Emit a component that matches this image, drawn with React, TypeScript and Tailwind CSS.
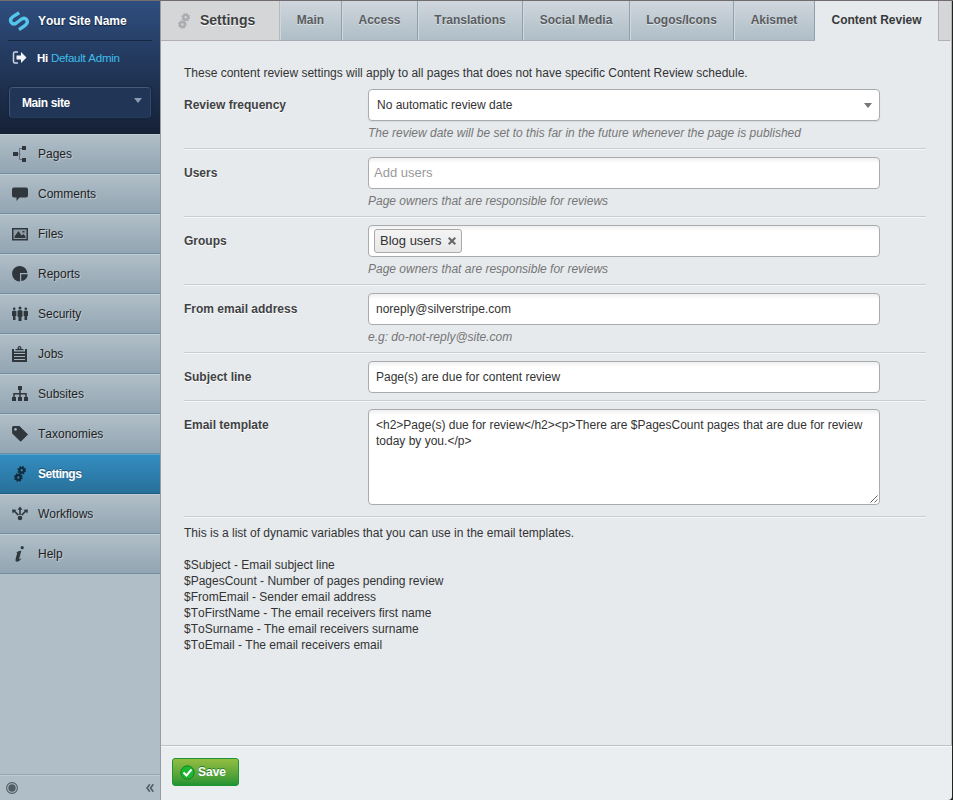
import React from "react";

const ink = "#2f373d";

const SmallGears = ({ color }: { color: string }) => (
  <svg width="16" height="16" viewBox="0 0 16 16" fill="none" stroke={color}>
    <circle cx="9.700" cy="4.300" r="2.300" strokeWidth="2.200" />
    <circle cx="9.700" cy="4.300" r="3.600" strokeWidth="1.500" strokeDasharray="1.600 1.230" />
    <circle cx="6.300" cy="11.500" r="2.300" strokeWidth="2.200" />
    <circle cx="6.300" cy="11.500" r="3.600" strokeWidth="1.500" strokeDasharray="1.600 1.230" />
  </svg>
);

const icons: Record<string, React.ReactNode> = {
  Pages: (
    <>
      <path d="M1 6h5v4H1zM10 0h4v4h-4zM10 12h4v4h-4z" fill={ink} />
      <path d="M6 8h2.500M10 2.500H7.500v11H10" stroke="#5f6e78" fill="none" />
    </>
  ),
  Comments: <path d="M2 1.500h12q2 0 2 2v6q0 2-2 2H7.500L4.500 15v-3.500H2q-2 0-2-2v-6q0-2 2-2z" fill={ink} />,
  Files: (
    <>
      <path d="M.75 2.750h14.500v11H.75z" fill="#8f9ca5" stroke={ink} strokeWidth="1.500" />
      <path d="M2.500 12V10.500L6.500 5l3 4.500L11.500 8l2 2.500V12zM10.500 5h2v1.500h-2z" fill={ink} />
    </>
  ),
  Reports: (
    <>
      <path d="M15.400 7A7.700 7.700 0 1 0 8 15.400V7z" fill={ink} />
      <path d="M9.200 8.300H15.800a7 7 0 0 1-6.600 6.800z" fill={ink} />
    </>
  ),
  Security: (
    <g fill={ink}>
      <circle cx="2.200" cy="2.800" r="1.300" />
      <circle cx="8" cy="2" r="1.500" />
      <circle cx="13.800" cy="2.800" r="1.300" />
      <path d="M0 5.300q2.200-1.500 4.400 0v4.700H3.500v4H1v-4H0zM5.500 4.700q2.500-1.500 5 0v6h-1v4.300h-3v-4.300h-1zM11.600 5.300q2.200-1.500 4.400 0v4.700h-.9v4h-2.600v-4h-.9z" />
    </g>
  ),
  Jobs: (
    <>
      <path d="M0 3h2v2.500h11V3h2v13H0z" fill={ink} />
      <path d="M3.500 4.300V3h2q0-3 2-3t2 3h2v1.300z" fill={ink} />
      <circle cx="7.500" cy="2" r=".8" fill="#a2b1bb" />
      <path d="M2 7.500h11M2 10.500h11M2 13.500h11" stroke="#a2b1bb" />
    </>
  ),
  Subsites: (
    <>
      <path d="M6 0h4v4H6zM0 11h4v4H0zM6 11h4v4H6zM12 11h4v4h-4z" fill={ink} />
      <path d="M8 4v7M2 11V7.750h12V11" stroke={ink} strokeWidth="1.500" fill="none" />
    </>
  ),
  Taxonomies: (
    <path
      fillRule="evenodd"
      fill={ink}
      d="M1.500 0h6L16 8.500 8.700 15.800.2 7.500 0 1.500Q0 0 1.500 0zM3.500 2a1.400 1.400 0 1 0 .01 0z"
    />
  ),
  Workflows: (
    <g fill={ink}>
      <circle cx="8" cy="12" r="2.300" />
      <path d="M8 .5l2.500 3.200H8.800V9H7.200V3.700H5.500zM0 3.500l4.500.2-1.200 1.300 3.600 3.500-1.100 1.200-3.700-3.600L.6 7.500zM16 3.500l-4.500.2 1.200 1.300-3.600 3.500 1.100 1.200 3.700-3.600 1.500 1.400z" />
    </g>
  ),
  Help: (
    <g fill={ink}>
      <circle cx="10.200" cy="1.700" r="1.600" />
      <path d="M4.500 6.500q2-2 4.800-1.700L7.200 12.700q0 1.200 1.800-.4l.3.500Q7 16 4.700 15.700 2.900 15 3.700 12.500L5.300 6.800l-.8.300z" />
    </g>
  ),
};

const menu = ["Pages", "Comments", "Files", "Reports", "Security", "Jobs", "Subsites", "Taxonomies", "Settings", "Workflows", "Help"];

function MenuItem({ name }: { name: string }) {
  const active = name === "Settings";
  return (
    <li
      className={
        "flex h-10 items-center border-t border-b pl-3 " +
        (active
          ? "border-t-[#55a4d2] border-b-[#1b5c84] bg-linear-to-b from-[#338dc1] to-[#287099] font-bold tracking-[-0.5px] text-white [text-shadow:0_-1px_0_#1e5270]"
          : "border-t-[#c1cdd4] border-b-[#748d9d] bg-linear-to-b from-[#b0bec7] to-[#92a5b2] text-[#1f1f1f] [text-shadow:1px_1px_0_#bfcad2]")
      }
    >
      {active ? (
        <SmallGears color="#122b3c" />
      ) : (
        <svg width="16" height="16" viewBox="0 0 16 16">{icons[name]}</svg>
      )}
      <span className="ml-2.5">{name}</span>
    </li>
  );
}

function Sidebar() {
  return (
    <aside className="flex w-[161px] shrink-0 flex-col border-r border-[#969ca1] bg-[#b0bec7]">
      <div className="h-[133px] bg-linear-to-b from-[#2f4e7f] to-[#152136]">
        <div className="mx-2 flex h-10 items-center border-b border-[#172540]">
          <svg width="22" height="22" viewBox="0 0 22 22" fill="none" stroke="#55c5ec" strokeWidth="3.400">
            <path d="M11.200 2.800 5 6.600Q1.200 9.300 3.300 12.500 5.300 15.200 8.400 13l5-3.800q3.300-2 5.200.4 2 3.200-1.400 5.700L11 19.700" />
          </svg>
          <span className="ml-2 font-bold text-white [text-shadow:0_1px_1px_#10203a]">Your Site Name</span>
        </div>
        <div className="flex h-[34px] items-center pl-3">
          <svg width="16" height="14" viewBox="0 0 16 14">
            <path d="M6 1H3Q1.500 1 1.500 2.500v8Q1.500 12 3 12h3" fill="none" stroke="#cdd5e2" strokeWidth="1.500" />
            <path d="M4.500 4.500H9V1l5.500 5.500L9 12V8.500H4.500z" fill="#f3f4f8" />
          </svg>
          <span className="ml-[9px] text-[11.500px] tracking-[-0.27px] text-[#3ebeec]">
            <b className="text-white">Hi</b> Default Admin
          </span>
        </div>
        <div className="mx-[9px] mt-3 flex h-[31px] items-center rounded border border-t-[#485a7b] border-r-[#354869] border-b-[#263b5c] border-l-[#425475] bg-[#213557] pr-2 pl-3 shadow-[0_0_2px_#101e35]">
          <span className="flex-1 font-bold tracking-[-0.4px] text-white">Main site</span>
          <span className="-mt-[5px] border-x-[4.500px] border-t-[5px] border-x-transparent border-t-[#8d9ab1]" />
        </div>
      </div>
      <ul>
        {menu.map((name) => (
          <MenuItem key={name} name={name} />
        ))}
      </ul>
      <div className="mt-auto flex h-[26px] items-center justify-between border-t border-[#96a8b3] pr-1.5 pl-1.5 shadow-[inset_0_1px_0_#bfcbd2]">
        <svg width="12" height="12" viewBox="0 0 12 12">
          <circle cx="6" cy="6" r="5.400" fill="none" stroke="#505c63" strokeWidth="1.100" />
          <circle cx="6" cy="6" r="3.700" fill="#505c63" />
        </svg>
        <svg width="8" height="8" viewBox="0 0 8 8" fill="none" stroke="#505b62" strokeWidth="1.600">
          <path d="M3.800.3 1 4l2.800 3.700M7.300.3 4.500 4l2.800 3.700" />
        </svg>
      </div>
    </aside>
  );
}

const tabs = [
  { name: "Main", width: "w-[62px]" },
  { name: "Access", width: "w-[76px]" },
  { name: "Translations", width: "w-[105px]" },
  { name: "Social Media", width: "w-[107px]" },
  { name: "Logos/Icons", width: "w-[104px]" },
  { name: "Akismet", width: "w-[81px]" },
];

function Header() {
  return (
    <header className="flex h-10 shrink-0 bg-[#d5d6d8] pr-px font-bold">
      <div className="flex w-[119px] items-center border-r border-b border-r-[#b5b9bc] border-b-[#b4afb5] pl-[15px]">
        <SmallGears color="#a9abae" />
        <h1 className="ml-2 pb-0.5 text-[14px] text-[#3c3f42] [text-shadow:0_1px_0_#fff]">Settings</h1>
      </div>
      {tabs.map((t) => (
        <div
          key={t.name}
          className={
            "flex items-center justify-center border-r border-b border-r-[#8fa1ae] border-b-[#a8adb5] bg-linear-to-b from-[#d0d6dd] to-[#aebec7] pb-0.5 text-[#5a5c5f] shadow-[inset_1px_0_0_#ced9de] [text-shadow:0_1px_0_#dfe4e8] " +
            t.width
          }
        >
          {t.name}
        </div>
      ))}
      <div className="flex w-[123px] items-center justify-center bg-[#e6eaed] pb-[3px] text-[#37393b]">Content Review</div>
      <div className="flex-1 border-b border-l border-[#b4afb5]" />
    </header>
  );
}

const box = "w-[512px] rounded border border-[#a9abad] bg-white text-[#333] shadow-[inset_0_5px_4px_-3px_#ececec]";

function Row({ label, help, className = "pb-[7px]", children }: { label: string; help?: string; className?: string; children: React.ReactNode }) {
  return (
    <div className={"flex border-b border-[#c9cdd1] pt-2 shadow-[0_1px_0_#f5f7f8] " + className}>
      <label className="w-[184px] pt-2 font-bold text-[#3f4143] [text-shadow:0_1px_0_#fff]">{label}</label>
      <div>
        {children}
        {help && <p className="mt-1 text-[#767676] italic">{help}</p>}
      </div>
    </div>
  );
}

function Form() {
  return (
    <div className="flex-1 bg-[#e6eaed] pt-6 pr-[25px] pl-[23px] text-[#333]">
      <p>These content review settings will apply to all pages that does not have specific Content Review schedule.</p>
      <Row label="Review frequency" help="The review date will be set to this far in the future whenever the page is published">
        <div className="flex h-8 w-[512px] items-center justify-between rounded border border-[#a9abad] bg-white pr-[7px] pl-2 shadow-[0_1px_1px_#d5d8da]">
          No automatic review date
          <span className="border-x-[4.500px] border-t-[5px] border-x-transparent border-t-[#777]" />
        </div>
      </Row>
      <Row label="Users" help="Page owners that are responsible for reviews">
        <div className={box + " flex h-8 items-center pl-[5px]"}>
          <span className="text-[13px] text-[#999]">Add users</span>
        </div>
      </Row>
      <Row label="Groups" help="Page owners that are responsible for reviews">
        <div className={box + " flex h-8 items-center pl-[5px]"}>
          <span className="flex h-6 w-[88px] items-center justify-between rounded-[3px] border border-[#aaa] bg-linear-to-b from-[#f4f4f4] to-[#e8e8e8] pr-[5px] pl-[5px] text-[13px]">
            Blog users
            <svg width="8" height="8" viewBox="0 0 8 8" stroke="#666" strokeWidth="2">
              <path d="M.7.7l6.600 6.600M7.300.7.7 7.300" />
            </svg>
          </span>
        </div>
      </Row>
      <Row label="From email address" help="e.g: do-not-reply@site.com">
        <div className={box + " flex h-8 items-center pl-[7px]"}>noreply@silverstripe.com</div>
      </Row>
      <Row label="Subject line">
        <div className={box + " flex h-8 items-center pl-[7px]"}>Page(s) are due for content review</div>
      </Row>
      <Row label="Email template" className="pb-[11px]">
        <div className={box + " flex h-24 flex-col justify-between pt-[7px] pl-[7px]"}>
          <p>
            &lt;h2&gt;Page(s) due for review&lt;/h2&gt;&lt;p&gt;There are $PagesCount pages that are due for review
            <br />
            today by you.&lt;/p&gt;
          </p>
          <svg className="mr-px mb-px self-end" width="8" height="8" viewBox="0 0 8 8" stroke="#666">
            <path d="M.5 7.500l7-7M4.500 7.500l3-3" />
          </svg>
        </div>
      </Row>
      <p className="mt-2">This is a list of dynamic variables that you can use in the email templates.</p>
      <p className="mt-4">
        $Subject - Email subject line
        <br />
        $PagesCount - Number of pages pending review
        <br />
        $FromEmail - Sender email address
        <br />
        $ToFirstName - The email receivers first name
        <br />
        $ToSurname - The email receivers surname
        <br />
        $ToEmail - The email receivers email
      </p>
    </div>
  );
}

export default function App() {
  return (
    <div className="flex h-[800px] w-[953px] overflow-hidden border-t border-t-[#706c70] bg-[#22251f] pr-px font-['Liberation_Sans',Arial,sans-serif] text-[12px] leading-4 [font-kerning:none]">
      <Sidebar />
      <main className="flex w-[791px] flex-col overflow-hidden rounded-br-[4px]">
        <div className="flex flex-1 flex-col border-r border-[#b1b4b6]">
          <Header />
          <Form />
        </div>
        <footer className="h-[55px] border-t border-[#bfc2c4] bg-[#eaeef1] pt-3 pl-[11px] shadow-[inset_0_1px_0_#f7f9fa]">
          <button className="flex h-7 w-[67px] items-center rounded-[3px] border border-[#1f9433] bg-linear-to-b from-[#93be42] to-[#1f9433] pl-[7px] font-bold text-white [text-shadow:0_-1px_0_#287c2b]">
            <svg width="15" height="15" viewBox="0 0 15 15" fill="none">
              <circle cx="7.500" cy="7.500" r="6.700" fill="#19b830" stroke="#168528" />
              <path d="M3.500 7.500l3 3 5-6" stroke="#fff" strokeWidth="2" />
            </svg>
            <span className="ml-[3px]">Save</span>
          </button>
        </footer>
      </main>
    </div>
  );
}
